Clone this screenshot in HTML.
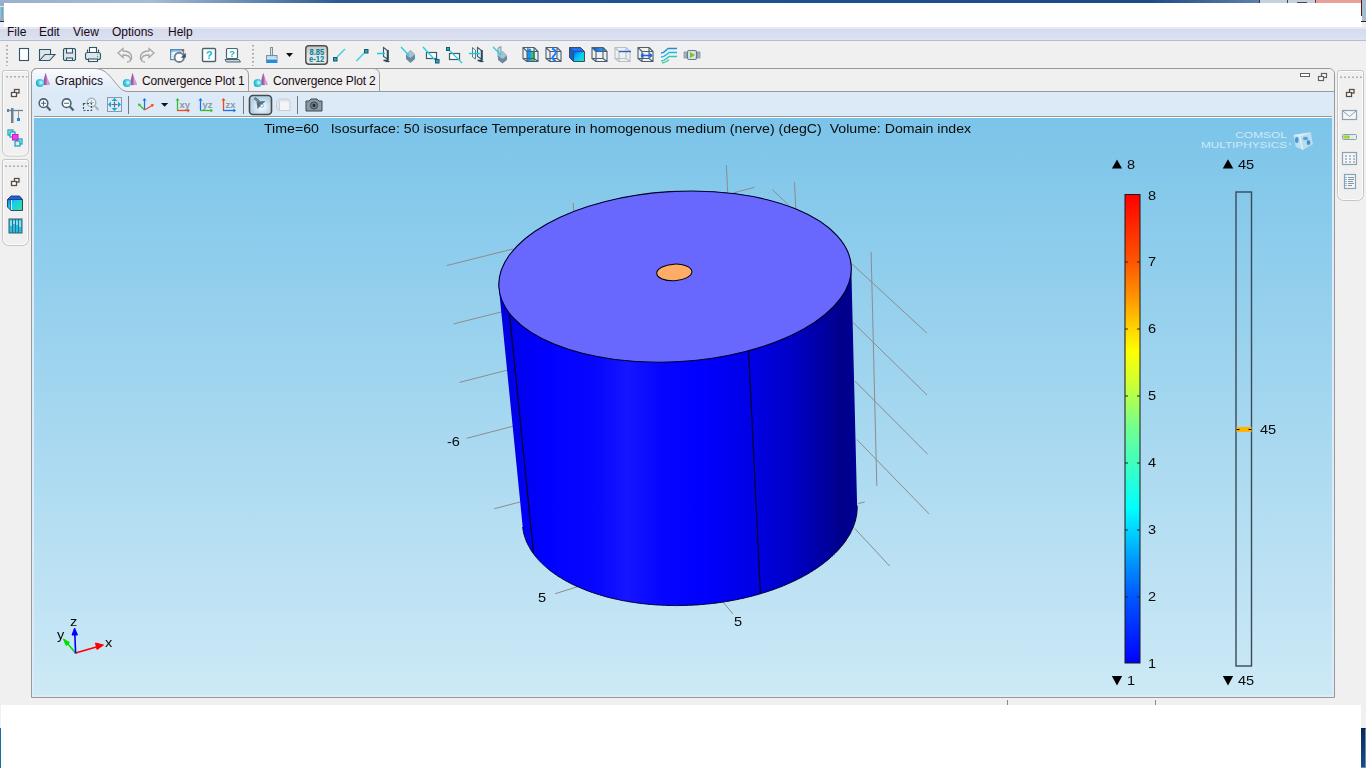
<!DOCTYPE html>
<html><head><meta charset="utf-8">
<style>
*{margin:0;padding:0;box-sizing:border-box}
html,body{width:1366px;height:768px;overflow:hidden;background:#f0f0f0;font-family:"Liberation Sans",sans-serif;position:relative}
.a{position:absolute}
#title{left:0;top:0;width:1366px;height:3px;background:linear-gradient(90deg,#9ab0cc 0,#a8bcd4 150px,#2a5a94 340px,#1f5090 700px,#1c4c88 1150px,#6080a8 1259px)}
#white{left:4px;top:3px;width:1358px;height:24px;background:#fff}
#menubar{left:0;top:27px;width:1366px;height:14px;background:linear-gradient(#e4e8f4 0,#e4e8f4 2px,#d5dbee 2px,#dce1f1 12px,#e2e6f3 13px);border-bottom:1px solid #b8bccc}
.menu{top:24px;font-size:12px;color:#1a0a14;line-height:16px}
#toolbar{left:0;top:41px;width:1366px;height:27px;background:#f0f0f0}
.ico{position:absolute}
.logo{font-size:9.2px;line-height:9px;color:#d0e9f6;white-space:pre}
.tabt{font-size:12px;color:#1a0a14;line-height:16px;white-space:pre}
.ctext{font-size:13px;color:#0a0a0a;line-height:18px;transform:scaleX(1.12);transform-origin:0 0;will-change:transform}
#bottomwhite{left:1px;top:705px;width:1360px;height:63px;background:#fff}
</style></head><body>
<div class="a" id="title"></div>
<div class="a" id="white"></div>
<div class="a" style="left:0;top:3px;width:4px;height:18px;background:#98acc4"></div><div class="a" style="left:0;top:7px;width:4px;height:10px;background:linear-gradient(90deg,#a8c4dc,#5aa8d8 60%,#c8d890)"></div><div class="a" style="left:0;top:6px;width:4px;height:1px;background:#e0e8f0"></div><div class="a" style="left:0;top:22px;width:4px;height:5px;background:#eef0f8"></div>
<div class="a" style="left:0;top:21px;width:4px;height:1px;background:#1a2a40"></div>
<div class="a" style="left:1259px;top:0;width:1px;height:3px;background:#2a3a4a"></div>
<div class="a" style="left:1260px;top:0;width:27px;height:3px;background:#c4d0dc"></div>
<div class="a" style="left:1287px;top:0;width:1px;height:3px;background:#3a4a5a"></div>
<div class="a" style="left:1288px;top:0;width:27px;height:3px;background:#c4d0dc"></div>
<div class="a" style="left:1297px;top:2px;width:10px;height:1px;background:#404a58"></div>
<div class="a" style="left:1315px;top:0;width:1px;height:3px;background:#6a3a34"></div>
<div class="a" style="left:1316px;top:0;width:45px;height:3px;background:#e8a098"></div>
<div class="a" style="left:1361px;top:0;width:1px;height:16px;background:#5a1a14"></div>
<div class="a" style="left:1362px;top:0;width:4px;height:21px;background:#a8bcd0"></div>
<div class="a" style="left:1361px;top:21px;width:5px;height:1px;background:#1a2a40"></div>
<div class="a" id="menubar"></div>
<div class="a menu" style="left:7px">File</div>
<div class="a menu" style="left:39px">Edit</div>
<div class="a menu" style="left:73px">View</div>
<div class="a menu" style="left:112px">Options</div>
<div class="a menu" style="left:168px">Help</div>

<!-- main toolbar icons -->
<svg class="a" style="left:0;top:40px" width="720" height="28" viewBox="0 40 720 28">
<defs>
<linearGradient id="cubeg" x1="0" y1="0" x2="1" y2="1"><stop offset="0" stop-color="#0060ff"/><stop offset="0.5" stop-color="#00c8ff"/><stop offset="1" stop-color="#30e0a0"/></linearGradient>
<linearGradient id="topg" x1="0" y1="0" x2="1" y2="0"><stop offset="0" stop-color="#0050e0"/><stop offset="1" stop-color="#40c0ff"/></linearGradient>
<linearGradient id="btng" x1="0" y1="0" x2="0" y2="1"><stop offset="0" stop-color="#f4f4f4"/><stop offset="1" stop-color="#dcdcdc"/></linearGradient>
</defs>
<!-- grip -->
<g fill="#a8a8a8"><rect x="6" y="45" width="2" height="1.5"/><rect x="6" y="49" width="2" height="1.5"/><rect x="6" y="53" width="2" height="1.5"/><rect x="6" y="57" width="2" height="1.5"/><rect x="6" y="61" width="2" height="1.5"/><rect x="6" y="65" width="1.5" height="1"/></g>
<g fill="#a8a8a8"><rect x="252" y="45" width="2" height="1.5"/><rect x="252" y="49" width="2" height="1.5"/><rect x="252" y="53" width="2" height="1.5"/><rect x="252" y="57" width="2" height="1.5"/><rect x="252" y="61" width="2" height="1.5"/><rect x="252" y="65" width="1.5" height="1"/></g>
<g stroke="#2f5568" stroke-width="1.1" fill="none">
<!-- new -->
<rect x="19.5" y="48.5" width="9" height="12" fill="#fff"/>
<!-- open -->
<path d="M39.5 60.5 V49.5 H50.5 V54.5" fill="#dde4ea"/>
<path d="M39.5 60.5 L45 54.5 H55 L49.5 60.5 Z" fill="#dde4ea"/>
<!-- save -->
<path d="M64.5 48.5 H74.5 L75.5 49.5 V59.5 L74.5 60.5 H64.5 L63.5 59.5 V49.5Z" fill="#dde4ea"/>
<rect x="66.5" y="48.5" width="6" height="4.5" fill="#f4f4f4"/>
<rect x="66.5" y="58" width="6" height="2.5" fill="#fff"/>
<!-- print -->
<rect x="89.5" y="47.5" width="7" height="5" fill="#fff"/>
<path d="M87.5 52.5 V49.5 M98.5 52.5 V49.5"/>
<rect x="85.5" y="52.5" width="15" height="7" rx="2" fill="#dde4ea"/>
<rect x="88.5" y="59" width="9" height="2.5" fill="#fff"/>
</g>
<rect x="97" y="54" width="1" height="1" fill="#999"/><rect x="97" y="56" width="1.2" height="1.2" fill="#22cc22"/>
<!-- undo redo -->
<g fill="none" stroke="#a8a8a8" stroke-width="1.3">
<path d="M123 48.5 L118 53 L123 57.5 V55 C128 55 130.5 56.5 130.5 59.5 C130.5 61 129 62 127 62 C131.5 62 132 58 131.5 56 C130.5 52.5 127 51 123 51 Z"/>
<path d="M149 48.5 L154 53 L149 57.5 V55 C144 55 141.5 56.5 141.5 59.5 C141.5 61 143 62 145 62 C140.5 62 140 58 140.5 56 C141.5 52.5 145 51 149 51 Z"/>
</g>
<!-- refresh -->
<rect x="170.6" y="49.6" width="13" height="10" fill="#f4f8fc" stroke="#5a8ab0" stroke-width="1.2"/>
<rect x="171" y="50" width="12" height="1.6" fill="#7ab8e0"/>
<rect x="171.2" y="50.2" width="1.4" height="1.4" fill="#10c0ff"/>
<rect x="182" y="49.6" width="1.6" height="1.6" fill="#ff3010"/>
<path d="M172 52 V58" stroke="#a8c8e0" stroke-width="1" stroke-dasharray="1 1"/>
<circle cx="179.2" cy="57.4" r="4.6" fill="#fff" stroke="#6a8090" stroke-width="1.9"/>
<path d="M180.8 57.8 H185.8 V52.8Z" fill="#3a5464"/>
<!-- help -->
<rect x="202.5" y="48.5" width="13" height="13" rx="1" fill="#fff" stroke="#4a6474" stroke-width="1.4"/>
<text x="209" y="59" font-family="Liberation Sans" font-weight="bold" font-size="11" fill="#00c0c8" text-anchor="middle">?</text>
<rect x="226.5" y="48.5" width="11" height="10" rx="1" fill="#fff" stroke="#4a6474" stroke-width="1.2"/>
<path d="M225 59.5 H239 L240.5 62 H226.5Z" fill="#c8d4dc" stroke="#4a6474" stroke-width="1"/>
<text x="232" y="56.5" font-family="Liberation Sans" font-weight="bold" font-size="9.5" fill="#00c0c8" text-anchor="middle">?</text>
<!-- brush -->
<rect x="270.5" y="47.5" width="2" height="8" fill="#dde4ea" stroke="#7890a0" stroke-width="1"/>
<rect x="266.5" y="55.5" width="10.5" height="7" fill="#c8d8e8" stroke="#7890a0" stroke-width="1"/>
<rect x="267" y="59" width="10" height="4" fill="#1a90e8"/>
<path d="M268 58 V60 M270 58 V60 M272 58 V60 M274 58 V60 M276 58 V60" stroke="#fff" stroke-width="0.8"/>
<path d="M286 53 H293 L289.5 57Z" fill="#111"/>
<!-- 8.85 button -->
<linearGradient id="btng2" x1="0" y1="0" x2="0" y2="1"><stop offset="0" stop-color="#c4c4c4"/><stop offset="0.5" stop-color="#e2e2e2"/><stop offset="1" stop-color="#ececec"/></linearGradient>
<rect x="305.8" y="45.8" width="21.6" height="18.4" rx="3.2" fill="url(#btng2)" stroke="#505050" stroke-width="1.5"/>
<text x="309.6" y="55" font-family="Liberation Sans" font-weight="bold" font-size="8.6" fill="#00809a" textLength="14.6" lengthAdjust="spacingAndGlyphs">8.85</text>
<text x="309" y="62.2" font-family="Liberation Sans" font-weight="bold" font-size="8.6" fill="#00809a" textLength="15.2" lengthAdjust="spacingAndGlyphs">e-12</text>
<!-- line icons -->
<line x1="337" y1="57" x2="345" y2="49" stroke="#40d0e0" stroke-width="1.5"/>
<rect x="333.5" y="57.5" width="3.5" height="3.5" fill="#4a9ab0" stroke="#00607a" stroke-width="1"/>
<line x1="356.5" y1="61" x2="364" y2="53" stroke="#40d0e0" stroke-width="1.5"/>
<rect x="364.5" y="49.5" width="3.5" height="3.5" fill="#4a9ab0" stroke="#00607a" stroke-width="1"/>
<!-- screen + line -->
<path d="M383.5 47.5 L387.5 50.5 V59 L383.5 56.5Z" fill="#f4f0f4" stroke="#3a5a6a" stroke-width="1.1"/>
<rect x="386.8" y="50" width="2" height="10" fill="#2a4a5a"/>
<path d="M383.5 60.5 H388.5" stroke="#2a4a5a" stroke-width="1.6"/>
<path d="M385.5 61.5 H389.5" stroke="#2a4a5a" stroke-width="1.2"/>
<line x1="377" y1="53.5" x2="385" y2="53.5" stroke="#10d0d8" stroke-width="1.5"/>
<!-- cube + line -->
<path d="M410.5 50 L415 54.5 V59 L410.5 63 L406 59 V54.5Z" fill="#6a8aa0"/>
<path d="M406 54.5 L410.5 50 L415 54.5 L410.5 58Z" fill="#a8c0d0"/>
<line x1="401" y1="47" x2="409" y2="55.5" stroke="#20d0e0" stroke-width="1.3"/>
<!-- rect + line + sq -->
<rect x="426.5" y="52.5" width="10" height="6" fill="#fff" stroke="#3a5a6a" stroke-width="1.2"/>
<line x1="423" y1="47" x2="435" y2="60" stroke="#20d0e0" stroke-width="1.3"/>
<rect x="435.5" y="59.5" width="3.5" height="3.5" fill="#4a9ab0" stroke="#00607a" stroke-width="1"/>
<rect x="446.5" y="47.5" width="3" height="3" fill="#4a9ab0" stroke="#00607a" stroke-width="1"/>
<rect x="449.5" y="53.5" width="10" height="6" fill="#fff" stroke="#3a5a6a" stroke-width="1.2"/>
<line x1="450" y1="51" x2="462" y2="63" stroke="#20d0e0" stroke-width="1.3"/>
<!-- two screens -->
<path d="M472.5 47.5 L475.5 50 V59 L472.5 57Z" fill="#f4f0f4" stroke="#5a7a8a" stroke-width="1"/>
<path d="M477.5 47.5 L481.5 50.5 V59 L477.5 56.5Z" fill="#f4f0f4" stroke="#3a5a6a" stroke-width="1.1"/>
<rect x="480.8" y="50" width="2" height="10" fill="#2a4a5a"/>
<path d="M477.5 60.5 H482.5" stroke="#2a4a5a" stroke-width="1.6"/>
<path d="M479.5 61.5 H483.5" stroke="#2a4a5a" stroke-width="1.2"/>
<line x1="469" y1="53.5" x2="480" y2="53.5" stroke="#10d0d8" stroke-width="1.5"/>
<!-- cube + plane -->
<path d="M498 48 V57 L501 53 V46.5Z" fill="#c8d8e0" stroke="#6a8aa0" stroke-width="0.8"/>
<path d="M502.5 51 L507 55.5 V60 L502.5 63.5 L498 60 V55.5Z" fill="#6a8aa0"/>
<path d="M498 55.5 L502.5 51 L507 55.5 L502.5 59Z" fill="#a8c0d0"/>
<line x1="493" y1="47" x2="501" y2="55" stroke="#20d0e0" stroke-width="1.3"/>
<!-- cubes -->
<path d="M527 48 V61 L531 61.5 V49Z" fill="#1a90ff"/><path d="M530.5 50 V61 L535 61 V52Z" fill="#30c080"/><path d="M523.0 47.5 H534.0 V58.5 H523.0Z M527.0 51.5 H538.0 V61.5 H527.0Z M523.0 47.5 L527.0 51.5 M534.0 47.5 L538.0 51.5 M534.0 58.5 L538.0 61.5 M523.0 58.5 L527.0 61.5" fill="none" stroke="#4a6070" stroke-width="1.1"/>
<path d="M546.0 47.5 H557.0 V58.5 H546.0Z M550.0 51.5 H561.0 V61.5 H550.0Z M546.0 47.5 L550.0 51.5 M557.0 47.5 L561.0 51.5 M557.0 58.5 L561.0 61.5 M546.0 58.5 L550.0 61.5" fill="none" stroke="#4a6070" stroke-width="1.1"/><path d="M552 48.5 C556 50 557 53 554 55.5 C551 58 553 60 556 61" fill="none" stroke="#1a80ff" stroke-width="2"/>
<path d="M569.5 47.5 H580.5 L584.5 51.5 V61.5 H573.5 L569.5 57.5Z" fill="#1060d0"/><rect x="573.5" y="51.5" width="11" height="10" fill="url(#cubeg)"/><path d="M569.5 47.5 H580.5 L584.5 51.5 H573.5Z" fill="#1a70ff"/><path d="M569.5 47.5 H580.5 L584.5 51.5 V61.5 H573.5 L569.5 57.5Z M573.5 51.5 H584.5 M573.5 51.5 V61.5 M569.5 47.5 L573.5 51.5" fill="none" stroke="#3a5060" stroke-width="1"/>
<path d="M592 47.5 H603 L607 51.5 H596Z" fill="url(#topg)"/><path d="M592.0 47.5 H603.0 V58.5 H592.0Z M596.0 51.5 H607.0 V61.5 H596.0Z M592.0 47.5 L596.0 51.5 M603.0 47.5 L607.0 51.5 M603.0 58.5 L607.0 61.5 M592.0 58.5 L596.0 61.5" fill="none" stroke="#4a6070" stroke-width="1.1"/>
<path d="M615.0 47.5 H626.0 V58.5 H615.0Z M619.0 51.5 H630.0 V61.5 H619.0Z M615.0 47.5 L619.0 51.5 M626.0 47.5 L630.0 51.5 M626.0 58.5 L630.0 61.5 M615.0 58.5 L619.0 61.5" fill="none" stroke="#b8c0c6" stroke-width="1.1"/><line x1="619" y1="51.5" x2="631" y2="51.5" stroke="#1a60e0" stroke-width="1.4"/>
<path d="M638.0 47.5 H649.0 V58.5 H638.0Z M642.0 51.5 H653.0 V61.5 H642.0Z M638.0 47.5 L642.0 51.5 M649.0 47.5 L653.0 51.5 M649.0 58.5 L653.0 61.5 M638.0 58.5 L642.0 61.5" fill="none" stroke="#4a6070" stroke-width="1.1"/><path d="M641 55.5 H652 M641 55.5 L643.5 53.5 M641 55.5 L643.5 57.5 M652 55.5 L649.5 53.5 M652 55.5 L649.5 57.5" stroke="#1a60e0" stroke-width="1.3" fill="none"/>
<!-- waves -->
<g fill="none" stroke-width="1.4">
<path d="M661 53 C665 53 666 50 668 48.5 H677" stroke="#1890d8"/>
<path d="M661 57 C665 57 667 54 669 52.5 H677" stroke="#20b8d8"/>
<path d="M661 61 C665 61 667 58 669 56.5 H677" stroke="#30c8b8"/>
<path d="M662 63 C665 63 667 61 669 60" stroke="#40c8a8"/>
</g>
<!-- play -->
<rect x="687.5" y="50.5" width="9" height="9" rx="1.5" fill="#d8e0e8" stroke="#6a7a88" stroke-width="1.1"/>
<path d="M690 52 L695 55 L690 58Z" fill="#7ac820"/>
<rect x="684" y="52" width="2.5" height="6" fill="#a8b8c4" stroke="#6a7a88" stroke-width="0.6"/>
<rect x="697.5" y="52" width="2.5" height="6" fill="#a8b8c4" stroke="#6a7a88" stroke-width="0.6"/>
</svg>

<!-- graphics window -->
<div class="a" style="left:31px;top:68px;width:1304px;height:630px;border:1px solid #989898;border-radius:6px 6px 0 0;background:#ddeaf8"></div>
<div class="a" style="left:32px;top:69px;width:1302px;height:22px;background:#f0f0f0;border-radius:5px 5px 0 0"></div>
<div class="a" style="left:32px;top:92px;width:1300px;height:24px;background:#dce9f7"></div>
<div class="a" style="left:34px;top:116px;width:1298px;height:1px;background:#989898"></div><div class="a" style="left:34px;top:117px;width:1298px;height:1px;background:#fff"></div>
<div class="a" id="canvas" style="left:34px;top:118px;width:1298px;height:577px;background:linear-gradient(#7bc4e9,#cde9f6)"></div>
<svg class="a" style="left:0;top:0" width="1366" height="768" viewBox="0 0 1366 768">
<defs>
<linearGradient id="side" gradientUnits="userSpaceOnUse" x1="498" y1="0" x2="858" y2="0"><stop offset="0.000" stop-color="#0000d8"/><stop offset="0.061" stop-color="#0000f0"/><stop offset="0.131" stop-color="#0000ff"/><stop offset="0.283" stop-color="#0808ff"/><stop offset="0.358" stop-color="#1515ff"/><stop offset="0.450" stop-color="#0606ff"/><stop offset="0.561" stop-color="#0000ff"/><stop offset="0.700" stop-color="#0000e6"/><stop offset="0.811" stop-color="#0000c8"/><stop offset="0.894" stop-color="#0000a6"/><stop offset="0.956" stop-color="#00008a"/><stop offset="1.000" stop-color="#000094"/></linearGradient>
</defs>
<g stroke="#8c8c8c" stroke-width="1" fill="none">
<line x1="446.9" y1="265.5" x2="513.3" y2="248.9"/>
<line x1="453.6" y1="323.9" x2="505" y2="311"/>
<line x1="459.5" y1="382.4" x2="510" y2="369.4"/>
<line x1="466.6" y1="438.3" x2="515" y2="425.7"/>
<line x1="494.3" y1="508.7" x2="520" y2="502"/>
<line x1="555.2" y1="593.7" x2="578" y2="586.6"/>
<line x1="726.4" y1="165.1" x2="727.7" y2="192.8"/>
<line x1="732.5" y1="193.2" x2="754.5" y2="187.3"/>
<line x1="772.2" y1="189.4" x2="789.6" y2="206"/>
<line x1="794.5" y1="182.2" x2="795.8" y2="208.2"/>
<line x1="573.2" y1="203" x2="573.8" y2="211.5"/>
<line x1="871.1" y1="251.9" x2="876.8" y2="486"/>
<line x1="851" y1="263" x2="926.9" y2="333.1"/>
<line x1="852.7" y1="322.2" x2="927" y2="395"/>
<line x1="854.8" y1="381" x2="927.9" y2="454.5"/>
<line x1="856.8" y1="439.5" x2="929" y2="513.8"/>
<line x1="858" y1="503.6" x2="864.7" y2="502"/>
<line x1="854.8" y1="528.5" x2="889.6" y2="566"/>
<line x1="723" y1="602" x2="733" y2="614"/>
</g>
<path d="M851.3 267.2 L857.1 505.5 L857.2 506.7 L857.2 507.9 L857.1 509.1 L857.1 510.3 L857.0 511.5 L856.9 512.7 L856.7 513.9 L856.6 515.1 L856.4 516.2 L856.1 517.4 L855.9 518.6 L855.6 519.8 L855.3 521.0 L854.9 522.2 L854.6 523.4 L854.2 524.6 L853.7 525.7 L853.3 526.9 L852.8 528.1 L852.3 529.3 L851.7 530.5 L851.2 531.6 L850.6 532.8 L850.0 534.0 L849.3 535.1 L848.6 536.3 L847.9 537.4 L847.2 538.6 L846.4 539.7 L845.7 540.9 L844.8 542.0 L844.0 543.2 L843.1 544.3 L842.3 545.4 L841.3 546.5 L840.4 547.6 L839.4 548.8 L838.4 549.9 L837.4 551.0 L836.4 552.0 L835.3 553.1 L834.2 554.2 L833.1 555.3 L831.9 556.3 L830.8 557.4 L829.6 558.4 L828.4 559.5 L827.1 560.5 L825.8 561.5 L824.6 562.5 L823.2 563.6 L821.9 564.6 L820.6 565.5 L819.2 566.5 L817.8 567.5 L816.4 568.5 L814.9 569.4 L813.4 570.4 L812.0 571.3 L810.4 572.2 L808.9 573.2 L807.4 574.1 L805.8 575.0 L804.2 575.8 L802.6 576.7 L801.0 577.6 L799.3 578.4 L797.7 579.3 L796.0 580.1 L794.3 580.9 L792.6 581.7 L790.8 582.5 L789.1 583.3 L787.3 584.1 L785.5 584.9 L783.7 585.6 L781.9 586.4 L780.0 587.1 L778.2 587.8 L776.3 588.5 L774.4 589.2 L772.5 589.9 L770.6 590.5 L768.7 591.2 L766.8 591.8 L764.8 592.4 L762.8 593.0 L760.9 593.6 L758.9 594.2 L756.9 594.8 L754.9 595.3 L752.8 595.9 L750.8 596.4 L748.7 596.9 L746.7 597.4 L744.6 597.9 L742.6 598.4 L740.5 598.8 L738.4 599.3 L736.3 599.7 L734.2 600.1 L732.0 600.5 L729.9 600.9 L727.8 601.3 L725.7 601.6 L723.5 602.0 L721.4 602.3 L719.2 602.6 L717.1 602.9 L714.9 603.2 L712.7 603.4 L710.5 603.7 L708.4 603.9 L706.2 604.1 L704.0 604.3 L701.8 604.5 L699.6 604.7 L697.4 604.9 L695.3 605.0 L693.1 605.1 L690.9 605.2 L688.7 605.3 L686.5 605.4 L684.3 605.5 L682.1 605.5 L679.9 605.5 L677.7 605.6 L675.6 605.6 L673.4 605.5 L671.2 605.5 L669.0 605.5 L666.8 605.4 L664.7 605.3 L662.5 605.2 L660.4 605.1 L658.2 605.0 L656.1 604.9 L653.9 604.7 L651.8 604.5 L649.6 604.4 L647.5 604.2 L645.4 603.9 L643.3 603.7 L641.2 603.5 L639.1 603.2 L637.0 602.9 L634.9 602.6 L632.9 602.3 L630.8 602.0 L628.8 601.7 L626.7 601.3 L624.7 600.9 L622.7 600.6 L620.7 600.2 L618.7 599.7 L616.7 599.3 L614.8 598.9 L612.8 598.4 L610.9 598.0 L608.9 597.5 L607.0 597.0 L605.1 596.5 L603.2 595.9 L601.4 595.4 L599.5 594.8 L597.7 594.3 L595.9 593.7 L594.1 593.1 L592.3 592.5 L590.5 591.9 L588.7 591.2 L587.0 590.6 L585.3 589.9 L583.6 589.2 L581.9 588.5 L580.2 587.8 L578.6 587.1 L577.0 586.4 L575.3 585.7 L573.8 584.9 L572.2 584.2 L570.6 583.4 L569.1 582.6 L567.6 581.8 L566.1 581.0 L564.6 580.2 L563.2 579.3 L561.8 578.5 L560.4 577.6 L559.0 576.8 L557.6 575.9 L556.3 575.0 L555.0 574.1 L553.7 573.2 L552.4 572.3 L551.2 571.4 L550.0 570.4 L548.8 569.5 L547.6 568.5 L546.5 567.6 L545.4 566.6 L544.3 565.6 L543.2 564.6 L542.1 563.6 L541.1 562.6 L540.1 561.6 L539.2 560.6 L538.2 559.6 L537.3 558.5 L536.4 557.5 L535.5 556.4 L534.7 555.4 L533.9 554.3 L533.1 553.2 L532.3 552.1 L531.6 551.0 L530.9 549.9 L530.2 548.8 L529.6 547.7 L529.0 546.6 L528.4 545.5 L527.8 544.4 L527.3 543.3 L526.7 542.1 L526.3 541.0 L525.8 539.8 L525.4 538.7 L525.0 537.5 L524.6 536.4 L524.3 535.2 L523.9 534.1 L523.7 532.9 L523.4 531.7 L523.2 530.6 L523.0 529.4 L522.8 528.2 L522.7 527.0 L498.9 288.2 L498.9 287.1 L498.8 285.9 L498.8 284.8 L498.8 283.7 L498.8 282.6 L498.9 281.5 L499.0 280.4 L499.1 279.2 L499.3 278.1 L499.5 277.0 L499.7 275.9 L500.0 274.8 L500.2 273.6 L500.6 272.5 L500.9 271.4 L501.3 270.3 L501.7 269.2 L502.1 268.0 L502.6 266.9 L503.0 265.8 L503.6 264.7 L504.1 263.6 L504.7 262.5 L505.3 261.4 L505.9 260.3 L506.6 259.2 L507.3 258.1 L508.0 257.0 L508.8 255.9 L509.5 254.8 L510.3 253.7 L511.2 252.7 L512.0 251.6 L512.9 250.5 L513.9 249.5 L514.8 248.4 L515.8 247.3 L516.8 246.3 L517.8 245.2 L518.9 244.2 L519.9 243.2 L521.1 242.1 L522.2 241.1 L523.4 240.1 L524.5 239.1 L525.8 238.1 L527.0 237.1 L528.3 236.1 L529.5 235.1 L530.9 234.1 L532.2 233.2 L533.6 232.2 L535.0 231.2 L536.4 230.3 L537.8 229.4 L539.3 228.4 L540.7 227.5 L542.3 226.6 L543.8 225.7 L545.3 224.8 L546.9 223.9 L548.5 223.0 L550.1 222.2 L551.8 221.3 L553.4 220.4 L555.1 219.6 L556.8 218.8 L558.5 217.9 L560.3 217.1 L562.0 216.3 L563.8 215.5 L565.6 214.8 L567.4 214.0 L569.2 213.2 L571.1 212.5 L573.0 211.7 L574.9 211.0 L576.8 210.3 L578.7 209.6 L580.6 208.9 L582.6 208.2 L584.6 207.6 L586.6 206.9 L588.6 206.3 L590.6 205.6 L592.6 205.0 L594.7 204.4 L596.7 203.8 L598.8 203.2 L600.9 202.6 L603.0 202.1 L605.1 201.5 L607.2 201.0 L609.3 200.5 L611.5 200.0 L613.6 199.5 L615.8 199.0 L618.0 198.5 L620.2 198.1 L622.4 197.6 L624.6 197.2 L626.8 196.8 L629.0 196.4 L631.3 196.0 L633.5 195.6 L635.7 195.3 L638.0 194.9 L640.2 194.6 L642.5 194.3 L644.8 194.0 L647.1 193.7 L649.3 193.4 L651.6 193.2 L653.9 192.9 L656.2 192.7 L658.5 192.5 L660.8 192.3 L663.1 192.1 L665.4 191.9 L667.7 191.8 L670.0 191.6 L672.3 191.5 L674.6 191.4 L676.9 191.3 L679.2 191.2 L681.5 191.1 L683.9 191.1 L686.2 191.0 L688.5 191.0 L690.8 191.0 L693.1 191.0 L695.3 191.0 L697.6 191.0 L699.9 191.1 L702.2 191.1 L704.5 191.2 L706.8 191.3 L709.0 191.4 L711.3 191.5 L713.5 191.7 L715.8 191.8 L718.0 192.0 L720.3 192.1 L722.5 192.3 L724.7 192.5 L726.9 192.8 L729.1 193.0 L731.3 193.2 L733.5 193.5 L735.7 193.8 L737.8 194.1 L740.0 194.4 L742.1 194.7 L744.2 195.0 L746.4 195.4 L748.5 195.7 L750.6 196.1 L752.6 196.5 L754.7 196.9 L756.7 197.3 L758.8 197.8 L760.8 198.2 L762.8 198.7 L764.8 199.1 L766.8 199.6 L768.7 200.1 L770.7 200.6 L772.6 201.2 L774.5 201.7 L776.4 202.2 L778.3 202.8 L780.2 203.4 L782.0 204.0 L783.8 204.6 L785.6 205.2 L787.4 205.8 L789.2 206.4 L791.0 207.1 L792.7 207.7 L794.4 208.4 L796.1 209.1 L797.7 209.8 L799.4 210.5 L801.0 211.2 L802.6 212.0 L804.2 212.7 L805.8 213.4 L807.3 214.2 L808.8 215.0 L810.3 215.8 L811.8 216.6 L813.2 217.4 L814.6 218.2 L816.0 219.0 L817.4 219.8 L818.8 220.7 L820.1 221.5 L821.4 222.4 L822.6 223.3 L823.9 224.2 L825.1 225.0 L826.3 225.9 L827.5 226.8 L828.6 227.8 L829.8 228.7 L830.8 229.6 L831.9 230.6 L833.0 231.5 L834.0 232.5 L834.9 233.4 L835.9 234.4 L836.8 235.4 L837.7 236.4 L838.6 237.4 L839.5 238.4 L840.3 239.4 L841.1 240.4 L841.8 241.4 L842.6 242.4 L843.3 243.5 L843.9 244.5 L844.6 245.5 L845.2 246.6 L845.8 247.6 L846.4 248.7 L846.9 249.8 L847.4 250.8 L847.9 251.9 L848.3 253.0 L848.7 254.0 L849.1 255.1 L849.4 256.2 L849.8 257.3 L850.0 258.4 L850.3 259.5 L850.5 260.6 L850.7 261.7 L850.9 262.8 L851.1 263.9 L851.2 265.0 L851.2 266.1Z" fill="url(#side)"/>
<path d="M857.1 505.5 L857.2 506.7 L857.2 507.9 L857.1 509.1 L857.1 510.3 L857.0 511.5 L856.9 512.7 L856.7 513.9 L856.6 515.1 L856.4 516.2 L856.1 517.4 L855.9 518.6 L855.6 519.8 L855.3 521.0 L854.9 522.2 L854.6 523.4 L854.2 524.6 L853.7 525.7 L853.3 526.9 L852.8 528.1 L852.3 529.3 L851.7 530.5 L851.2 531.6 L850.6 532.8 L850.0 534.0 L849.3 535.1 L848.6 536.3 L847.9 537.4 L847.2 538.6 L846.4 539.7 L845.7 540.9 L844.8 542.0 L844.0 543.2 L843.1 544.3 L842.3 545.4 L841.3 546.5 L840.4 547.6 L839.4 548.8 L838.4 549.9 L837.4 551.0 L836.4 552.0 L835.3 553.1 L834.2 554.2 L833.1 555.3 L831.9 556.3 L830.8 557.4 L829.6 558.4 L828.4 559.5 L827.1 560.5 L825.8 561.5 L824.6 562.5 L823.2 563.6 L821.9 564.6 L820.6 565.5 L819.2 566.5 L817.8 567.5 L816.4 568.5 L814.9 569.4 L813.4 570.4 L812.0 571.3 L810.4 572.2 L808.9 573.2 L807.4 574.1 L805.8 575.0 L804.2 575.8 L802.6 576.7 L801.0 577.6 L799.3 578.4 L797.7 579.3 L796.0 580.1 L794.3 580.9 L792.6 581.7 L790.8 582.5 L789.1 583.3 L787.3 584.1 L785.5 584.9 L783.7 585.6 L781.9 586.4 L780.0 587.1 L778.2 587.8 L776.3 588.5 L774.4 589.2 L772.5 589.9 L770.6 590.5 L768.7 591.2 L766.8 591.8 L764.8 592.4 L762.8 593.0 L760.9 593.6 L758.9 594.2 L756.9 594.8 L754.9 595.3 L752.8 595.9 L750.8 596.4 L748.7 596.9 L746.7 597.4 L744.6 597.9 L742.6 598.4 L740.5 598.8 L738.4 599.3 L736.3 599.7 L734.2 600.1 L732.0 600.5 L729.9 600.9 L727.8 601.3 L725.7 601.6 L723.5 602.0 L721.4 602.3 L719.2 602.6 L717.1 602.9 L714.9 603.2 L712.7 603.4 L710.5 603.7 L708.4 603.9 L706.2 604.1 L704.0 604.3 L701.8 604.5 L699.6 604.7 L697.4 604.9 L695.3 605.0 L693.1 605.1 L690.9 605.2 L688.7 605.3 L686.5 605.4 L684.3 605.5 L682.1 605.5 L679.9 605.5 L677.7 605.6 L675.6 605.6 L673.4 605.5 L671.2 605.5 L669.0 605.5 L666.8 605.4 L664.7 605.3 L662.5 605.2 L660.4 605.1 L658.2 605.0 L656.1 604.9 L653.9 604.7 L651.8 604.5 L649.6 604.4 L647.5 604.2 L645.4 603.9 L643.3 603.7 L641.2 603.5 L639.1 603.2 L637.0 602.9 L634.9 602.6 L632.9 602.3 L630.8 602.0 L628.8 601.7 L626.7 601.3 L624.7 600.9 L622.7 600.6 L620.7 600.2 L618.7 599.7 L616.7 599.3 L614.8 598.9 L612.8 598.4 L610.9 598.0 L608.9 597.5 L607.0 597.0 L605.1 596.5 L603.2 595.9 L601.4 595.4 L599.5 594.8 L597.7 594.3 L595.9 593.7 L594.1 593.1 L592.3 592.5 L590.5 591.9 L588.7 591.2 L587.0 590.6 L585.3 589.9 L583.6 589.2 L581.9 588.5 L580.2 587.8 L578.6 587.1 L577.0 586.4 L575.3 585.7 L573.8 584.9 L572.2 584.2 L570.6 583.4 L569.1 582.6 L567.6 581.8 L566.1 581.0 L564.6 580.2 L563.2 579.3 L561.8 578.5 L560.4 577.6 L559.0 576.8 L557.6 575.9 L556.3 575.0 L555.0 574.1 L553.7 573.2 L552.4 572.3 L551.2 571.4 L550.0 570.4 L548.8 569.5 L547.6 568.5 L546.5 567.6 L545.4 566.6 L544.3 565.6 L543.2 564.6 L542.1 563.6 L541.1 562.6 L540.1 561.6 L539.2 560.6 L538.2 559.6 L537.3 558.5 L536.4 557.5 L535.5 556.4 L534.7 555.4 L533.9 554.3 L533.1 553.2 L532.3 552.1 L531.6 551.0 L530.9 549.9 L530.2 548.8 L529.6 547.7 L529.0 546.6 L528.4 545.5 L527.8 544.4 L527.3 543.3 L526.7 542.1 L526.3 541.0 L525.8 539.8 L525.4 538.7 L525.0 537.5 L524.6 536.4 L524.3 535.2 L523.9 534.1 L523.7 532.9 L523.4 531.7 L523.2 530.6 L523.0 529.4 L522.8 528.2 L522.7 527.0" fill="none" stroke="#000030" stroke-width="1"/>
<line x1="509.5" y1="313.5" x2="533.5" y2="552.8" stroke="#000018" stroke-width="1.1"/>
<line x1="748.6" y1="350.5" x2="760.4" y2="593.5" stroke="#000018" stroke-width="1.1"/>
<ellipse cx="675.06" cy="276.59" rx="176.5" ry="85.13" transform="rotate(-3.4 675.06 276.59)" fill="#6868ff" stroke="#000028" stroke-width="1.1"/>
<ellipse cx="674.3" cy="272.45" rx="17.6" ry="8.3" transform="rotate(-3 674.3 272.45)" fill="#ffac66" stroke="#000" stroke-width="1"/>
</svg>

<!-- tabs + graphics toolbar -->
<svg class="a" style="left:0;top:60px" width="1366" height="60" viewBox="0 60 1366 60">
<defs>
<linearGradient id="acttab" x1="0" y1="0" x2="0" y2="1"><stop offset="0" stop-color="#fafcfe"/><stop offset="1" stop-color="#dce9f7"/></linearGradient>
<radialGradient id="ball" cx="0.62" cy="0.45" r="0.6"><stop offset="0" stop-color="#e8fcfc"/><stop offset="0.45" stop-color="#60d4e4"/><stop offset="1" stop-color="#08b0d0"/></radialGradient>
<linearGradient id="cone" x1="0" y1="0" x2="1" y2="0"><stop offset="0" stop-color="#b060b8"/><stop offset="0.35" stop-color="#9a50a8"/><stop offset="0.7" stop-color="#d8a8d8"/><stop offset="1" stop-color="#b070b8"/></linearGradient>
<radialGradient id="press" cx="0.55" cy="0.6" r="0.5"><stop offset="0" stop-color="#ffffff"/><stop offset="1" stop-color="#b4d4e6"/></radialGradient>
</defs>
<!-- active tab -->
<path d="M31.5 91.5 V74.5 Q31.5 68.5 37.5 68.5 H94 C104 68.5 108 74 114 81 C119 87 122 91.5 128 91.5" fill="url(#acttab)" stroke="#9a9a9a" stroke-width="1"/>
<path d="M128 91.5 H1334" stroke="#9a9a9a" stroke-width="1"/>
<path d="M242 68.5 Q248.5 68.5 248.5 75 V91" fill="none" stroke="#a0a0a0" stroke-width="1"/>
<path d="M373 68.5 Q379.5 68.5 379.5 75 V91" fill="none" stroke="#a0a0a0" stroke-width="1"/>
<!-- tab icons -->
<path d="M45.5 72.8 L42.6 84.6 Q46.5 86 50 84.6Z" fill="url(#cone)"/>
<circle cx="40" cy="83" r="4.1" fill="url(#ball)"/>
<path d="M132.5 72.8 L129.6 84.6 Q133.5 86 137 84.6Z" fill="url(#cone)"/>
<circle cx="127" cy="83" r="4.1" fill="url(#ball)"/>
<path d="M263.2 72.8 L260.3 84.6 Q264.2 86 267.7 84.6Z" fill="url(#cone)"/>
<circle cx="257.7" cy="83" r="4.1" fill="url(#ball)"/>
<!-- graphics toolbar icons -->
<g fill="none" stroke="#4a6474" stroke-width="1.6">
<circle cx="43.5" cy="103.2" r="4.3" fill="#fff"/>
<line x1="46.8" y1="106.5" x2="50.5" y2="110.5" stroke-width="2.2"/>
<circle cx="66.6" cy="103.2" r="4.3" fill="#fff"/>
<line x1="69.9" y1="106.5" x2="73.6" y2="110.5" stroke-width="2.2"/>
</g>
<path d="M41 103.2 H46 M43.5 100.7 V105.7 M64.1 103.2 H69.1" stroke="#4a6474" stroke-width="1.1"/>
<g fill="none" stroke="#a8b4bc" stroke-width="1.5"><circle cx="91.5" cy="102.5" r="4.3" fill="#eef4f8"/><line x1="94.8" y1="105.8" x2="98.5" y2="110" stroke-width="2"/></g>
<path d="M89 102.5 H94 M91.5 100 V105" stroke="#a8b4bc" stroke-width="1"/>
<rect x="83.5" y="103.5" width="8" height="7" fill="none" stroke="#3a5060" stroke-width="1.2" stroke-dasharray="2 1.5"/>
<rect x="107.5" y="97.5" width="14" height="14" fill="none" stroke="#8a9aa8" stroke-width="1"/>
<g fill="#10a8d8"><path d="M114.5 98 L111.5 101 H117.5Z"/><path d="M114.5 111 L111.5 108 H117.5Z"/><path d="M108 104.5 L111 101.5 V107.5Z"/><path d="M121 104.5 L118 101.5 V107.5Z"/></g>
<path d="M111.5 104.5 H117.5 M114.5 101.5 V107.5" stroke="#5a7080" stroke-width="1.2"/>
<rect x="128" y="96" width="1" height="18" fill="#707880"/>
<!-- axes -->
<path d="M144.5 110 V99" stroke="#1a70e8" stroke-width="1.2"/><path d="M144.5 98 L142.5 100.5 H146.5Z" fill="#1a70e8"/>
<path d="M144.5 110 L139 104.5" stroke="#30c030" stroke-width="1.2"/><path d="M138 103.5 L138.5 106.5 L141 104Z" fill="#30c030"/>
<path d="M144.5 110 L153 105" stroke="#f04818" stroke-width="1.2"/><path d="M154 104 L150.5 104.5 L152.5 107Z" fill="#f04818"/>
<path d="M161 103 H168.2 L164.6 106.8Z" fill="#111"/>
<!-- xy yz zx -->
<g stroke-width="1.3">
<path d="M177.5 110.5 V99.5" stroke="#30c030"/><path d="M177.5 98 L175.5 100.5 H179.5Z" fill="#30c030"/>
<path d="M177 110.5 H188.5" stroke="#f04818"/><path d="M190 110.5 L187.5 108.5 V112.5Z" fill="#f04818"/>
<path d="M200.5 110.5 V99.5" stroke="#1a70e8"/><path d="M200.5 98 L198.5 100.5 H202.5Z" fill="#1a70e8"/>
<path d="M200 110.5 H211.5" stroke="#30c030"/><path d="M213 110.5 L210.5 108.5 V112.5Z" fill="#30c030"/>
<path d="M223.5 110.5 V99.5" stroke="#f04818"/><path d="M223.5 98 L221.5 100.5 H225.5Z" fill="#f04818"/>
<path d="M223 110.5 H234.5" stroke="#1a70e8"/><path d="M236 110.5 L233.5 108.5 V112.5Z" fill="#1a70e8"/>
</g>
<g font-family="Liberation Sans" font-size="9.5" font-weight="bold" fill="#8a9aa6"><text x="179.5" y="108">xy</text><text x="202.5" y="108">yz</text><text x="225.5" y="108">zx</text></g>
<rect x="243" y="96" width="1" height="18" fill="#707880"/>
<rect x="249.5" y="95.5" width="22" height="19" rx="3.5" fill="url(#press)" stroke="#4a4a4a" stroke-width="1.6"/>
<path d="M254.5 98 L259 101.5" stroke="#5a7080" stroke-width="2.6"/>
<path d="M254.8 98.6 L258.6 101.4" stroke="#a8c0cc" stroke-width="0.6"/>
<path d="M256.5 101.5 L265.5 101 L257.5 109Z" fill="#5a7080"/>
<circle cx="262" cy="105.8" r="1.6" fill="#fff" stroke="#6aa8e0" stroke-width="0.8"/>
<path d="M276.5 101.5 L279.5 99 H288 L290 101.5 V110 L287.5 111 H279.5 L276.5 108.5Z" fill="#dfe5e8"/>
<rect x="279.5" y="101.5" width="10" height="9" fill="#f2f4f5"/>
<path d="M276.5 101.5 L279.5 99 H288 L290 101.5 M279.5 101.5 V110.5 M276.5 101.5 V108.5 L279.5 111 M290 101.5 V110.5 H279.5" fill="none" stroke="#c4ccd0" stroke-width="0.9"/>
<rect x="297" y="96" width="1" height="18" fill="#707880"/>
<!-- camera -->
<path d="M306 101 H309 L311 99 H317 L319 101 H322 V111 H306Z" fill="#8a9aa4" stroke="#3a4a52" stroke-width="1"/>
<circle cx="314" cy="105.5" r="3.6" fill="#6a7a84" stroke="#3a4a52" stroke-width="1"/>
<circle cx="314" cy="105.5" r="1.4" fill="#222"/>
<!-- window min/restore -->
<rect x="1300.5" y="73.5" width="9" height="3" fill="#fff" stroke="#606060" stroke-width="1"/>
<rect x="1321.5" y="73.5" width="5" height="4" fill="#fff" stroke="#606060" stroke-width="1.2"/>
<rect x="1318.5" y="76.5" width="5" height="4" fill="#fff" stroke="#606060" stroke-width="1.2"/>
</svg>
<div class="a tabt" style="left:55px;top:73px">Graphics</div>
<div class="a tabt" style="left:142px;top:73px;letter-spacing:-0.16px">Convergence Plot 1</div>
<div class="a tabt" style="left:273px;top:73px;letter-spacing:-0.16px">Convergence Plot 2</div>

<!-- sidebars -->
<svg class="a" style="left:0;top:60px" width="40" height="200" viewBox="0 60 40 200">
<defs>
<linearGradient id="cube2" x1="0" y1="0" x2="1" y2="1"><stop offset="0" stop-color="#1060ff"/><stop offset="0.45" stop-color="#10d0f0"/><stop offset="1" stop-color="#40e090"/></linearGradient>
</defs>
<path d="M4.5 70.5 H26.5 Q28.5 70.5 28.5 72.5 V149.0 Q28.5 156.0 21.5 156.0 H9.5 Q2.5 156.0 2.5 149.0 V72.5 Q2.5 70.5 4.5 70.5Z" fill="#f0f0f0" stroke="#c4c4c4" stroke-width="1"/><path d="M5.0 71.5 H26.0 Q27.5 71.5 27.5 73.0 V149.0 Q27.5 155.0 21.5 155.0 H9.5 Q3.5 155.0 3.5 149.0 V73.0 Q3.5 71.5 5.0 71.5Z" fill="none" stroke="#fbfbfb" stroke-width="1"/>
<path d="M4.5 159.5 H26.5 Q28.5 159.5 28.5 161.5 V238.5 Q28.5 245.5 21.5 245.5 H9.5 Q2.5 245.5 2.5 238.5 V161.5 Q2.5 159.5 4.5 159.5Z" fill="#f0f0f0" stroke="#c4c4c4" stroke-width="1"/><path d="M5.0 160.5 H26.0 Q27.5 160.5 27.5 162.0 V238.5 Q27.5 244.5 21.5 244.5 H9.5 Q3.5 244.5 3.5 238.5 V162.0 Q3.5 160.5 5.0 160.5Z" fill="none" stroke="#fbfbfb" stroke-width="1"/>
<g fill="#b0b0b0">
<rect x="6" y="76" width="2" height="1.5"/><rect x="10" y="76" width="2" height="1.5"/><rect x="14" y="76" width="2" height="1.5"/><rect x="18" y="76" width="2" height="1.5"/><rect x="22" y="76" width="2" height="1.5"/><rect x="26" y="76" width="1.5" height="1.5"/>
<rect x="5" y="165.5" width="2" height="1.5"/><rect x="9" y="165.5" width="2" height="1.5"/><rect x="13" y="165.5" width="2" height="1.5"/><rect x="17" y="165.5" width="2" height="1.5"/><rect x="21" y="165.5" width="2" height="1.5"/><rect x="25" y="165.5" width="2" height="1.5"/>
</g>
<g fill="#fff" stroke="#5a4c40" stroke-width="1.3">
<rect x="14.5" y="89.5" width="4.5" height="3.5"/><rect x="11.5" y="92.5" width="5" height="4"/>
<rect x="14.5" y="178.5" width="4.5" height="3.5"/><rect x="11.5" y="181.5" width="5" height="4"/>
</g>
<!-- crane -->
<rect x="11" y="108" width="2.5" height="15" fill="#6a8294"/>
<path d="M7 110.5 H23" stroke="#6a8294" stroke-width="1.3"/>
<rect x="7" y="109" width="2" height="3" fill="#6a8294"/>
<path d="M18.5 111 V118" stroke="#8aa0b0" stroke-width="1"/>
<rect x="17" y="118" width="3" height="3" fill="#1a8ae8"/>
<!-- molecules -->
<g stroke="#10a0b8" stroke-width="1.2" fill="#dff6fa">
<rect x="8" y="130" width="5" height="5"/><rect x="10" y="132" width="5" height="5"/>
<rect x="17" y="139" width="5" height="5"/><rect x="15" y="141" width="5" height="5" fill="#d0f0f8"/>
</g>
<rect x="12.5" y="134.5" width="5.5" height="5.5" fill="#f040e0" stroke="#c020c0" stroke-width="1"/>
<!-- cube -->
<path d="M7.5 199.5 L11 196 H19.5 L23 199.5 V210.5 H11 L7.5 207Z" fill="url(#cube2)"/>
<path d="M7.5 199.5 L11 196 H19.5 L22.5 199.5 H11Z" fill="#1a60f0"/>
<path d="M11 199.5 H22.5 V210.5 H11Z M7.5 199.5 L11 196 H19.5 L22.5 199.5 M11 199.5 L7.5 199.5 V207 L11 210.5" fill="none" stroke="#2a3a50" stroke-width="0.9"/>
<path d="M11.5 200 V210" stroke="#fff" stroke-width="0.8"/>
<!-- grid -->
<rect x="9" y="219" width="13" height="14" fill="#20c0e0" stroke="#3a5a70" stroke-width="1"/>
<path d="M12.5 219 V233 M15.5 219 V233 M18.5 219 V233" stroke="#3a5a70" stroke-width="0.8"/>
<path d="M11 220.5 V226 M14 220.5 V224 M17 220.5 V225 M20 220.5 V227" stroke="#e8ffff" stroke-width="1"/>
</svg>
<svg class="a" style="left:1330px;top:60px" width="36" height="150" viewBox="1330 60 36 150">
<path d="M1339.5 70.5 H1361.5 Q1363.5 70.5 1363.5 72.5 V193.5 Q1363.5 200.5 1356.5 200.5 H1344.5 Q1337.5 200.5 1337.5 193.5 V72.5 Q1337.5 70.5 1339.5 70.5Z" fill="#f0f0f0" stroke="#c4c4c4" stroke-width="1"/><path d="M1340.0 71.5 H1361.0 Q1362.5 71.5 1362.5 73.0 V193.5 Q1362.5 199.5 1356.5 199.5 H1344.5 Q1338.5 199.5 1338.5 193.5 V73.0 Q1338.5 71.5 1340.0 71.5Z" fill="none" stroke="#fbfbfb" stroke-width="1"/>
<g fill="#b0b0b0"><rect x="1340" y="76.5" width="2" height="1.5"/><rect x="1344" y="76.5" width="2" height="1.5"/><rect x="1348" y="76.5" width="2" height="1.5"/><rect x="1352" y="76.5" width="2" height="1.5"/><rect x="1356" y="76.5" width="2" height="1.5"/><rect x="1360" y="76.5" width="2" height="1.5"/></g>
<g fill="#fff" stroke="#5a4c40" stroke-width="1.3"><rect x="1349.5" y="89.5" width="4.5" height="3.5"/><rect x="1346.5" y="92.5" width="5" height="4"/></g>
<rect x="1342.5" y="110.5" width="14" height="9" fill="#f4f6f8" stroke="#8aa2b2" stroke-width="1.2"/>
<path d="M1343 111 L1349.5 116.5 L1356 111" fill="none" stroke="#8aa2b2" stroke-width="1"/>
<rect x="1342.5" y="134.5" width="14" height="5" rx="1" fill="#e8eef2" stroke="#8aa2b2" stroke-width="1"/>
<rect x="1343.5" y="135.5" width="6" height="3" fill="#88d010"/>
<path d="M1345 135.5 V138.5 M1347 135.5 V138.5 M1351 135.5 V138.5 M1353 135.5 V138.5" stroke="#d8e8d0" stroke-width="0.6"/>
<rect x="1342.5" y="152.5" width="14" height="12" fill="#f4f6f8" stroke="#8aa2b2" stroke-width="1.2"/>
<path d="M1345 156 H1347 M1349 156 H1351 M1353 156 H1355 M1345 159 H1347 M1349 159 H1351 M1353 159 H1355 M1345 162 H1347 M1349 162 H1351 M1353 162 H1355" stroke="#6a8aa0" stroke-width="1"/>
<rect x="1344.5" y="174.5" width="11" height="14" fill="#f4f6f8" stroke="#8aa2b2" stroke-width="1.2"/>
<path d="M1346 177 V186" stroke="#1a8ae8" stroke-width="1" stroke-dasharray="1 1"/>
<path d="M1348 177.5 H1354 M1348 179.5 H1354 M1348 181.5 H1353 M1348 183.5 H1354 M1348 185.5 H1352" stroke="#7a8a98" stroke-width="0.9"/>
</svg>
<!-- logo -->
<div class="a logo" style="left:1187px;top:131px;width:100px;text-align:right;transform:scaleX(1.3);transform-origin:100% 0">COMSOL</div>
<div class="a logo" style="left:1187px;top:141px;width:100px;text-align:right;transform:scaleX(1.28);transform-origin:100% 0">MULTIPHYSICS</div>
<div class="a" style="left:1289px;top:143px;width:2px;height:2px;border-radius:1px;background:#c0e0f2"></div>
<svg class="a" style="left:1288px;top:128px" width="30" height="26" viewBox="1288 128 30 26">
<path d="M1293.4 135.1 L1310.7 132.2 L1312.7 144.3 L1302.6 149.7 L1295.8 147Z" fill="#c4e2f2" opacity="0.9"/>
<path d="M1293.4 135.1 L1310.7 132.2 L1300 137Z" fill="#d8eef8"/>
<path d="M1300 137 L1310.7 132.2 L1312.7 144.3 L1302.6 149.7Z" fill="#b8dcf0"/>
<path d="M1300 137 L1302.6 149.7" stroke="#e4f4fc" stroke-width="1.2"/>
<ellipse cx="1296.8" cy="140" rx="1.8" ry="3" fill="#3a8ac8" opacity="0.85"/>
<ellipse cx="1305.5" cy="138.5" rx="2.6" ry="1.8" fill="#4a94d0" opacity="0.85"/>
<ellipse cx="1308.5" cy="142.5" rx="1.8" ry="2.6" fill="#3080c4" opacity="0.85"/>
</svg>
<!-- canvas text -->
<div class="a ctext" style="left:264px;top:120px;white-space:pre;transform:scaleX(1.088);transform-origin:0 0">Time=60   Isosurface: 50 isosurface Temperature in homogenous medium (nerve) (degC)  Volume: Domain index</div>
<div class="a ctext" style="left:447px;top:433px">-6</div>
<div class="a ctext" style="left:538px;top:589px">5</div>
<div class="a ctext" style="left:734px;top:613px">5</div>
<!-- legend 1 -->
<svg class="a" style="left:0;top:0" width="1366" height="768" viewBox="0 0 1366 768">
<defs>
<linearGradient id="jet" x1="0" y1="1" x2="0" y2="0">
<stop offset="0" stop-color="#0000ff"/>
<stop offset="0.143" stop-color="#0058ff"/>
<stop offset="0.214" stop-color="#0094ff"/>
<stop offset="0.33" stop-color="#00ffff"/>
<stop offset="0.5" stop-color="#70ff90"/>
<stop offset="0.6" stop-color="#d0ff30"/>
<stop offset="0.666" stop-color="#ffff00"/>
<stop offset="0.714" stop-color="#ffd400"/>
<stop offset="0.786" stop-color="#ff9000"/>
<stop offset="0.857" stop-color="#ff5500"/>
<stop offset="1" stop-color="#ff0000"/>
</linearGradient>
</defs>
<path d="M1112 168.5 L1117 159.5 L1122 168.5Z" fill="#000"/>
<path d="M1222.8 168.5 L1228 159.2 L1233.2 168.5Z" fill="#000"/>
<path d="M1111.8 676 L1117 685.5 L1122.2 676Z" fill="#000"/>
<path d="M1222.8 676 L1228 685.5 L1233.2 676Z" fill="#000"/>
<rect x="1125" y="194.5" width="15" height="468.5" fill="url(#jet)" stroke="#1a1a1a" stroke-width="1"/>
<g stroke="#222" stroke-width="1">
<line x1="1125" y1="262.0" x2="1128" y2="262.0"/><line x1="1137" y1="262.0" x2="1140" y2="262.0"/>
<line x1="1125" y1="329.0" x2="1128" y2="329.0"/><line x1="1137" y1="329.0" x2="1140" y2="329.0"/>
<line x1="1125" y1="396.0" x2="1128" y2="396.0"/><line x1="1137" y1="396.0" x2="1140" y2="396.0"/>
<line x1="1125" y1="463.0" x2="1128" y2="463.0"/><line x1="1137" y1="463.0" x2="1140" y2="463.0"/>
<line x1="1125" y1="530.0" x2="1128" y2="530.0"/><line x1="1137" y1="530.0" x2="1140" y2="530.0"/>
<line x1="1125" y1="597.0" x2="1128" y2="597.0"/><line x1="1137" y1="597.0" x2="1140" y2="597.0"/>
</g>
<rect x="1236" y="192" width="15.5" height="474" fill="none" stroke="#3a4a58" stroke-width="1.4"/>
<rect x="1236.5" y="427" width="15" height="5" fill="#ffb400"/><path d="M1236.5 429.5 H1239.5 M1248.5 429.5 H1251.5" stroke="#000" stroke-width="1"/>
<!-- triad -->
<g stroke-linecap="butt">
<line x1="75.6" y1="653" x2="64.5" y2="640" stroke="#00e000" stroke-width="1.6"/>
<path d="M63.5 639 L69.5 642.5 L66 645.5Z" fill="#00e000" stroke="#00e000" stroke-width="1"/>
<line x1="75.6" y1="653" x2="98" y2="646.5" stroke="#ff0000" stroke-width="1.6"/>
<path d="M103.5 645 L95.5 643 L97 649.5Z" fill="#ff0000" stroke="#ff0000" stroke-width="1"/>
<line x1="75.6" y1="653.5" x2="74.8" y2="633" stroke="#0000ff" stroke-width="1.6"/>
<path d="M74.6 628 L72 635 L77.5 635Z" fill="#0000ff" stroke="#0000ff" stroke-width="1"/>
</g>
</svg>
<div class="a ctext" style="left:1127px;top:156px">8</div>
<div class="a ctext" style="left:1238px;top:156px">45</div>
<div class="a ctext" style="left:1127px;top:672px">1</div>
<div class="a ctext" style="left:1238px;top:672px">45</div>
<div class="a ctext" style="left:1148px;top:187px">8</div>
<div class="a ctext" style="left:1148px;top:253px">7</div>
<div class="a ctext" style="left:1148px;top:320px">6</div>
<div class="a ctext" style="left:1148px;top:387px">5</div>
<div class="a ctext" style="left:1148px;top:454px">4</div>
<div class="a ctext" style="left:1148px;top:521px">3</div>
<div class="a ctext" style="left:1148px;top:588px">2</div>
<div class="a ctext" style="left:1148px;top:655px">1</div>
<div class="a ctext" style="left:1260px;top:421px">45</div>
<div class="a ctext" style="left:70px;top:613px">z</div>
<div class="a ctext" style="left:57px;top:626px">y</div>
<div class="a ctext" style="left:105px;top:634px">x</div>

<!-- bottom strip -->
<div class="a" style="left:1007px;top:700px;width:1px;height:5px;background:#8a8a8a"></div>
<div class="a" style="left:1155px;top:700px;width:1px;height:5px;background:#8a8a8a"></div>

<div class="a" id="bottomwhite"></div>
<div class="a" style="left:0;top:728px;width:1px;height:40px;background:#1a6aa8"></div>
<div class="a" style="left:1361px;top:728px;width:5px;height:40px;background:linear-gradient(#0a2a5a,#123a70 50%,#1a4a8a);border:1px solid #6a8ab0;border-left:none;border-top-color:#0a2040"></div>
</body></html>
